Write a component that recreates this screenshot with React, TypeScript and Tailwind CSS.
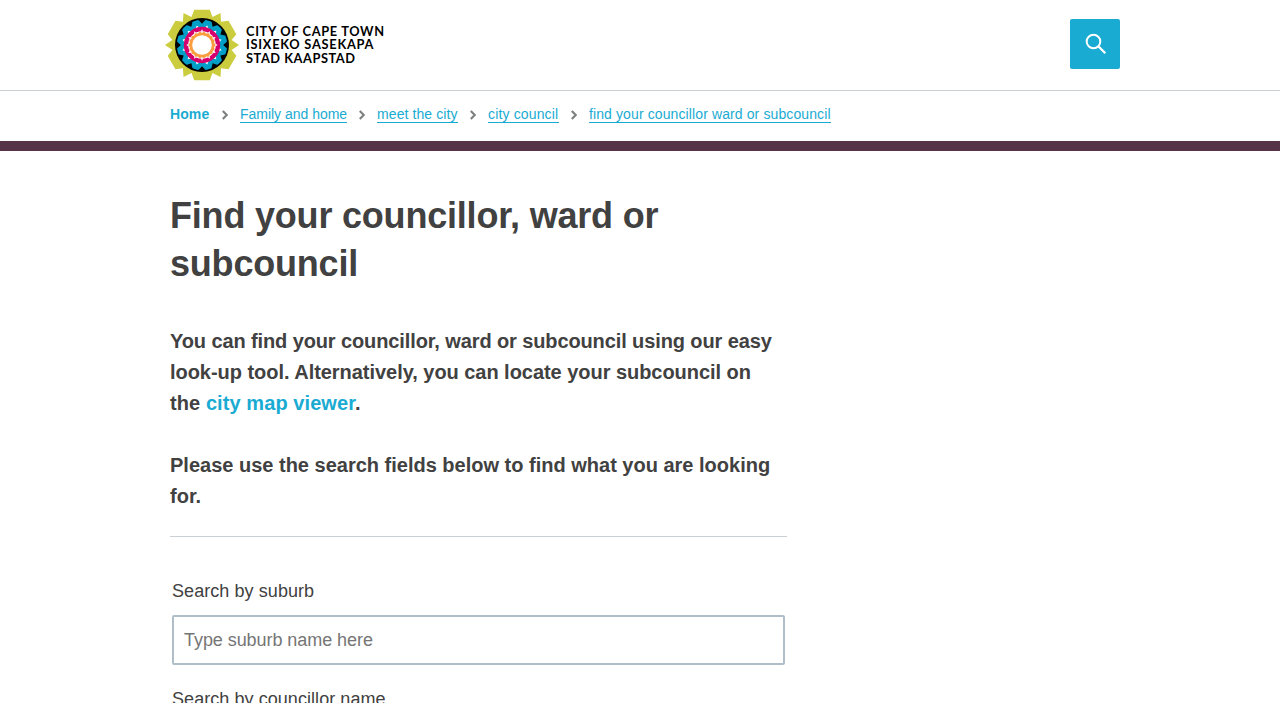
import type { ReactNode } from "react";

const polar = (r: number, deg: number) => {
  const a = (deg * Math.PI) / 180;
  return `${(r * Math.cos(a)).toFixed(2)},${(r * Math.sin(a)).toFixed(2)}`;
};

const star = (count: number, outer: number, inner: number, offset = 0) =>
  Array.from({ length: count * 2 }, (_, i) =>
    polar(i % 2 ? inner : outer, offset + (i * 180) / count),
  ).join(" ");

const petals = Array.from({ length: 6 }, (_, i) => {
  const a = i * 60;
  return [
    polar(30, a - 9.5),
    polar(37, a),
    polar(30, a + 9.5),
    polar(36, a + 17.5),
    polar(36, a + 42.5),
  ].join(" ");
}).join(" ");

function Teeth({ base, tip, spread, offset = 0, fill }: { base: number; tip: number; spread: number; offset?: number; fill: string }) {
  return (
    <g fill={fill}>
      {Array.from({ length: 12 }, (_, i) => {
        const a = offset + i * 30;
        return <polygon key={i} points={`${polar(base, a - spread)} ${polar(tip, a)} ${polar(base, a + spread)}`} />;
      })}
    </g>
  );
}

function Emblem() {
  return (
    <svg width="76" height="72" viewBox="-38 -36 76 72" aria-hidden="true">
      <polygon points={petals} fill="#cbcd3f" />
      <circle r="27" fill="#000" />
      <circle r="25.2" fill="#009fc7" />
      <Teeth base={26} tip={21.2} spread={9} fill="#000" />
      <Teeth base={17.5} tip={20.2} spread={7} offset={15} fill="#fff" />
      <circle r="18.2" fill="#d6006d" />
      <circle r="13.8" fill="#fff" />
      <Teeth base={13.5} tip={15.8} spread={5} fill="#fff" />
      <polygon points={star(18, 13.5, 12.3, 0)} fill="#f99d3e" />
      <circle r="9.8" fill="#fff" />
    </svg>
  );
}

function Logo() {
  return (
    <a href="#" className="-ml-[6px] flex items-center">
      <Emblem />
      <svg
        className="ml-1 font-['Lato'] text-[12.8px] font-bold"
        width="146"
        height="50"
        viewBox="0 0 146 50"
        fill="#000"
      >
        <text x="2" y="15.5" textLength="138">CITY OF CAPE TOWN</text>
        <text x="2" y="29.2" textLength="127.5">ISIXEKO SASEKAPA</text>
        <text x="2" y="42.8" textLength="109">STAD KAAPSTAD</text>
      </svg>
    </a>
  );
}

function Crumb({ children, track }: { children: ReactNode; track: string }) {
  return (
    <li className="flex items-center">
      <svg className="mx-3 mt-px" width="6" height="10" viewBox="0 0 6 10" fill="none" stroke="#7d8080" strokeWidth="2.2">
        <path d="M0.8 0.9 4.8 5 0.8 9.1" />
      </svg>
      <a href="#" className={`h-[17px] border-b border-[#1aabd2] leading-4 whitespace-nowrap ${track}`}>
        {children}
      </a>
    </li>
  );
}

export default function App() {
  return (
    <div className="h-[703px] overflow-hidden bg-white font-['Liberation_Sans',Arial,sans-serif] text-[#414141]">
      <header className="h-[91px] border-b border-[#cbd0d4]">
        <div className="mx-auto flex h-[90px] w-[960px] items-center justify-between pl-2.5">
          <Logo />
          <button aria-label="Search" className="-mt-[2px] flex h-[50px] w-[50px] items-center justify-center rounded-[2px] bg-[#1aabd2]">
            <svg className="ml-0.5" width="22" height="22" viewBox="0 0 22 22" fill="none" stroke="#fff" strokeWidth="2">
              <circle cx="8.5" cy="8.5" r="6.8" />
              <path d="M13.3 13.3 20.3 20.3" strokeWidth="2.3" />
            </svg>
          </button>
        </div>
      </header>
      <nav className="h-[60px] border-b-[10px] border-[#573348]">
        <ol className="mx-auto flex h-[46px] w-[960px] items-center pl-2.5 text-sm text-[#1aabd2]">
          <li className="w-10 font-bold">
            <a href="#" className="tracking-[0.1px]">Home</a>
          </li>
          <Crumb track="w-[107px] tracking-[-0.02px]">Family and home</Crumb>
          <Crumb track="w-[81px] tracking-[0.09px]">meet the city</Crumb>
          <Crumb track="w-[71px] tracking-[0.15px]">city council</Crumb>
          <Crumb track="w-[242px] tracking-[0.11px]">find your councillor ward or subcouncil</Crumb>
        </ol>
      </nav>
      <main className="mx-auto w-[960px] pt-[41px] pl-2.5">
        <div className="w-[617px]">
          <h1 className="text-4xl leading-12 font-bold tracking-[-0.2px]">
            Find your councillor, ward or
            <br />
            subcouncil
          </h1>
          <div className="mt-[38px] border-b border-[#cbd0d4] pb-6 text-xl leading-[31px] font-bold whitespace-nowrap">
            <p>
              <span className="tracking-[-0.11px]">You can find your councillor, ward or subcouncil using our easy</span>
              <br />
              <span className="tracking-[-0.04px]">look-up tool. Alternatively, you can locate your subcouncil on</span>
              <br />
              <span className="tracking-[0.08px]">the <a href="#" className="text-[#1aabd2]">city map viewer</a>.</span>
            </p>
            <p className="mt-[31px]">
              Please use the search fields below to find what you are looking
              <br />
              for.
            </p>
          </div>
          <form className="mt-10 px-0.5 text-lg">
            <label className="block leading-7 tracking-[0.07px]" htmlFor="suburb">Search by suburb</label>
            <input
              id="suburb"
              placeholder="Type suburb name here"
              className="mt-2.5 block h-[50px] w-full rounded-[2px] border-2 border-[#b0bec8] px-2.5 tracking-[-0.06px] placeholder:text-[#757575]"
            />
            <label className="mt-5 block leading-7 tracking-[0.06px]">Search by councillor name</label>
          </form>
        </div>
      </main>
    </div>
  );
}
